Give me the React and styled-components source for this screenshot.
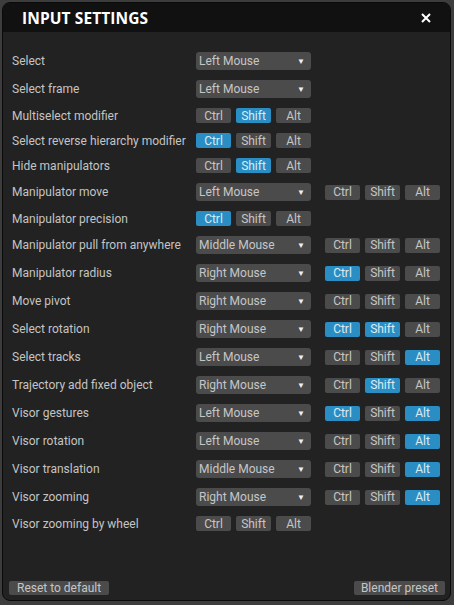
import React from "react";
import styled, { createGlobalStyle } from "styled-components";

const GlobalStyle = createGlobalStyle`
  body {
    margin: 0;
    background: #3d3d3d;
    font-family: Roboto, "Liberation Sans", sans-serif;
  }
`

const Dialog = styled.div`
  margin: 2px;
  width: 447px;
  height: 597px;
  border: 1px solid #0a0a0a;
  border-radius: 8px;
  background: #222222;
  overflow: hidden;
  display: flex;
  flex-direction: column;
`

const Header = styled.div`
  height: 29px;
  background: #111111;
  display: flex;
  align-items: center;
  justify-content: space-between;
  padding: 0 19px 0 19px;
`

const Title = styled.div`
  font-family: "Open Sans", sans-serif;
  font-weight: 700;
  font-size: 15.5px;
  letter-spacing: 0.1px;
  color: #ffffff;
`

const Close = styled.div`
  width: 10px;
  height: 10px;
  display: flex;
  align-items: center;
  justify-content: center;
`

const Body = styled.div`
  flex: 1;
  padding: 20px 9px 0 9px;
  display: flex;
  flex-direction: column;
  gap: 10px;
`

const Row = styled.div`
  display: flex;
  align-items: center;
  height: ${p => (p.tall ? 18 : 15)}px;
`

const Label = styled.div`
  width: 184px;
  font-size: 12px;
  color: #c4c4c4;
  white-space: nowrap;
`

const Dropdown = styled.div`
  width: 115px;
  height: 18px;
  box-sizing: border-box;
  border-radius: 3px;
  background: #4b4b4b;
  color: #c6c6c6;
  font-size: 12px;
  display: flex;
  align-items: center;
  justify-content: space-between;
  padding: 0 6px 0 3px;
  margin-right: 14px;
`

const Arrow = styled.span`
  font-size: 8px;
  color: #f0f0f0;
`

const Mods = styled.div`
  display: flex;
  gap: 5px;
`

const Mod = styled.div`
  width: 35px;
  height: 15px;
  border-radius: 2px;
  background: ${p => (p.active ? "#2a8ec4" : "#4b4b4b")};
  color: ${p => (p.active ? "#dcebf3" : "#c6c6c6")};
  font-size: 12px;
  display: flex;
  align-items: center;
  justify-content: center;
`

const Footer = styled.div`
  display: flex;
  justify-content: space-between;
  padding: 0 5px 5px 6px;
`

const FooterButton = styled.div`
  height: 14px;
  border-radius: 2px;
  background: #4b4b4b;
  color: #c6c6c6;
  font-size: 12px;
  display: flex;
  align-items: center;
  padding: 0 ${p => p.pad}px;
`

const rows = [
  { label: "Select", mouse: "Left Mouse" },
  { label: "Select frame", mouse: "Left Mouse" },
  { label: "Multiselect modifier", mods: [0, 1, 0] },
  { label: "Select reverse hierarchy modifier", mods: [1, 0, 0] },
  { label: "Hide manipulators", mods: [0, 1, 0] },
  { label: "Manipulator move", mouse: "Left Mouse", mods: [0, 0, 0] },
  { label: "Manipulator precision", mods: [1, 0, 0] },
  { label: "Manipulator pull from anywhere", mouse: "Middle Mouse", mods: [0, 0, 0] },
  { label: "Manipulator radius", mouse: "Right Mouse", mods: [1, 0, 0] },
  { label: "Move pivot", mouse: "Right Mouse", mods: [0, 0, 0] },
  { label: "Select rotation", mouse: "Right Mouse", mods: [1, 1, 0] },
  { label: "Select tracks", mouse: "Left Mouse", mods: [0, 0, 1] },
  { label: "Trajectory add fixed object", mouse: "Right Mouse", mods: [0, 1, 0] },
  { label: "Visor gestures", mouse: "Left Mouse", mods: [1, 0, 1] },
  { label: "Visor rotation", mouse: "Left Mouse", mods: [0, 0, 1] },
  { label: "Visor translation", mouse: "Middle Mouse", mods: [0, 0, 1] },
  { label: "Visor zooming", mouse: "Right Mouse", mods: [0, 0, 1] },
  { label: "Visor zooming by wheel", mods: [0, 0, 0] },
]

const modNames = ["Ctrl", "Shift", "Alt"]

export default function App() {
  return (
    <>
      <GlobalStyle />
      <Dialog>
        <Header>
          <Title>INPUT SETTINGS</Title>
          <Close>
            <svg width="10" height="10" viewBox="0 0 10 10">
              <path d="M1 1L9 9M9 1L1 9" stroke="#ffffff" strokeWidth="2" />
            </svg>
          </Close>
        </Header>
        <Body>
          {rows.map(r => (
            <Row key={r.label} tall={!!r.mouse}>
              <Label>{r.label}</Label>
              {r.mouse && (
                <Dropdown>
                  {r.mouse}
                  <Arrow>▼</Arrow>
                </Dropdown>
              )}
              {r.mods && (
                <Mods>
                  {r.mods.map((on, i) => (
                    <Mod key={i} active={!!on}>{modNames[i]}</Mod>
                  ))}
                </Mods>
              )}
            </Row>
          ))}
        </Body>
        <Footer>
          <FooterButton pad={8}>Reset to default</FooterButton>
          <FooterButton pad={7}>Blender preset</FooterButton>
        </Footer>
      </Dialog>
    </>
  )
}
